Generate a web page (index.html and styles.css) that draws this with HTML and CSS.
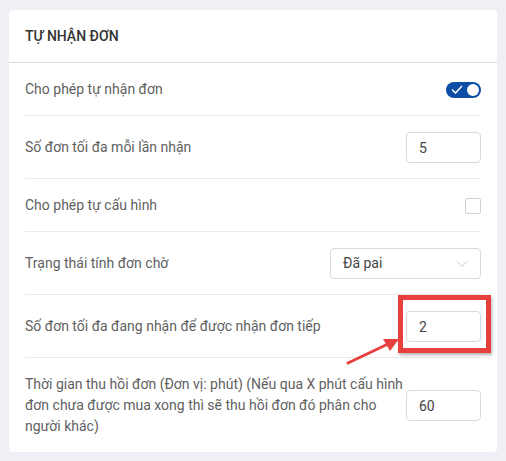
FILE: index.html
```html
<!DOCTYPE html>
<html lang="vi">
<head>
    <meta charset="UTF-8">
    <meta name="viewport" content="width=device-width, initial-scale=1.0">
    <title>Tự nhận đơn</title>
    <link rel="stylesheet" href="styles.css">
</head>
<body>
    <div class="card">
        <div class="card-header">TỰ NHẬN ĐƠN</div>
        <div class="card-body">
            <div class="row">
                <div class="label">Cho phép tự nhận đơn</div>
                <span class="switch">
                    <svg class="switch-check" width="12" height="9" viewBox="0 0 12 9"><path d="M1 4.5l3.5 3.5L11 1" fill="none" stroke="#fff" stroke-width="1.5"/></svg>
                    <span class="switch-knob"></span>
                </span>
            </div>
            <div class="row">
                <div class="label">Số đơn tối đa mỗi lần nhận</div>
                <div class="field"><input class="input" type="text" value="5"></div>
            </div>
            <div class="row">
                <div class="label">Cho phép tự cấu hình</div>
                <span class="checkbox"></span>
            </div>
            <div class="row">
                <div class="label">Trạng thái tính đơn chờ</div>
                <div class="select">
                    <span>Đã pai</span>
                    <svg width="12" height="8" viewBox="0 0 12 8"><path d="M1 1.5l5 5 5-5" fill="none" stroke="#c4c4c4" stroke-width="1"/></svg>
                </div>
            </div>
            <div class="row">
                <div class="label">Số đơn tối đa đang nhận để được nhận đơn tiếp</div>
                <div class="field">
                    <input class="input" type="text" value="2">
                    <!-- annotation -->
                    <span class="mark-box"></span>
                    <svg class="mark-arrow" width="58" height="36" viewBox="0 0 58 36">
                        <path d="M4 30L44 11" stroke="#e8403f" stroke-width="3" stroke-linecap="round"/>
                        <path d="M55 6L39 6 46 18z" fill="#e8403f"/>
                    </svg>
                </div>
            </div>
            <div class="row last">
                <div class="label">Thời gian thu hồi đơn (Đơn vị: phút) (Nếu qua X phút cấu hình đơn chưa được mua xong thì sẽ thu hồi đơn đó phân cho người khác)</div>
                <div class="field"><input class="input" type="text" value="60"></div>
            </div>
        </div>
    </div>
</body>
</html>
```

FILE: styles.css
```css
body {
    margin: 0;
    padding: 10px 9px;
    background: #eef0f5;
    font-family: Roboto, "Noto Sans", Arial, sans-serif;
    font-size: 14px;
    line-height: 21px;
    color: #5f5f5f;
}
.card {
    background: #fff;
    border-radius: 4px;
}
.card-header {
    padding: 16px 16px 15px;
    font-weight: 500;
    color: #333;
    border-bottom: 1px solid #d9d9d9;
}
.card-body {
    padding: 0 16px;
}
.row {
    display: flex;
    align-items: center;
    justify-content: space-between;
    padding: 16px 0 15px;
    border-bottom: 1px solid #ebebeb;
}
.row.last {
    border-bottom: none;
}
.label {
    flex: 1;
    margin-right: -4px;
}
.field {
    position: relative;
    flex: none;
}
.input {
    display: block;
    box-sizing: border-box;
    width: 75px;
    height: 31px;
    padding: 0 12px;
    border: 1px solid #d9d9d9;
    border-radius: 4px;
    font-family: inherit;
    font-size: 14px;
    color: #444;
    outline: none;
}
.switch {
    position: relative;
    display: flex;
    align-items: center;
    width: 35px;
    height: 16px;
    border-radius: 8px;
    background: #0c4ea6;
}
.switch-check {
    margin-left: 5px;
}
.switch-knob {
    position: absolute;
    right: 2px;
    top: 2px;
    width: 12px;
    height: 12px;
    border-radius: 50%;
    background: #fff;
}
.checkbox {
    box-sizing: border-box;
    width: 16px;
    height: 16px;
    border: 1px solid #d0d0d0;
    border-radius: 2px;
}
.select {
    box-sizing: border-box;
    display: flex;
    align-items: center;
    justify-content: space-between;
    width: 151px;
    height: 31px;
    padding: 0 12px;
    border: 1px solid #d9d9d9;
    border-radius: 4px;
    color: #444;
}
.mark-box {
    position: absolute;
    left: -8px;
    top: -16px;
    width: 93px;
    height: 58px;
    box-sizing: border-box;
    border: 5px solid #e8403f;
    box-shadow: 1px 2px 3px rgba(0, 0, 0, 0.3);
}
.mark-arrow {
    position: absolute;
    left: -62px;
    top: 22px;
}
```
